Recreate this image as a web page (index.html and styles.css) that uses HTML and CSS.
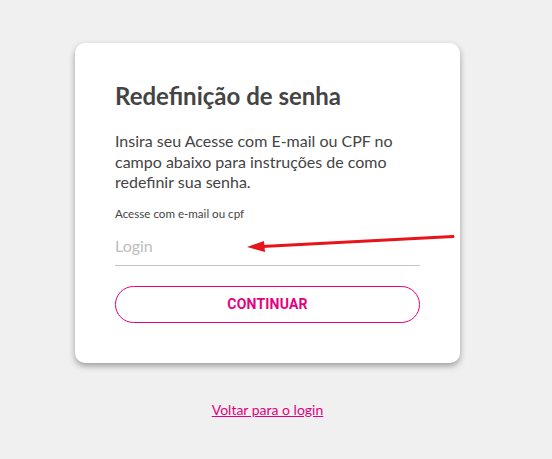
FILE: index.html
```html
<!DOCTYPE html>
<html lang="pt-BR">
<head>
  <meta charset="UTF-8" />
  <title>Redefinição de senha</title>
  <link rel="stylesheet" href="styles.css">
</head>
<body>
  <div class="page">
    <div class="card">
      <h1>Redefinição de senha</h1>
      <p class="intro">Insira seu Acesse com E-mail ou CPF no campo abaixo para instruções de como redefinir sua senha.</p>

      <label class="label" for="login">Acesse com e-mail ou cpf</label>
      <input class="field" id="login" type="text" placeholder="Login">

      <button class="btn">CONTINUAR</button>
    </div>

    <a class="back" href="#">Voltar para o login</a>
  </div>

  <!-- annotation arrow -->
  <svg class="arrow" width="552" height="459" viewBox="0 0 552 459">
    <line x1="453" y1="236.5" x2="262" y2="246.5" stroke="#e8141b" stroke-width="3" stroke-linecap="round"/>
    <polygon points="247,247 264,241 265,252" fill="#e8141b"/>
  </svg>
</body>
</html>
```

FILE: styles.css
```css
body {
  margin: 0;
  background: #f0f0f0;
  font-family: "Lato", sans-serif;
  color: #444;
}

.page {
  width: 535px;
  padding-top: 43px;
  display: flex;
  flex-direction: column;
  align-items: center;
}

.card {
  width: 385px;
  box-sizing: border-box;
  background: #fff;
  border-radius: 10px;
  padding: 38px 40px 40px;
  box-shadow: 0 3px 6px rgba(0, 0, 0, 0.35);
  display: flex;
  flex-direction: column;
}

h1 {
  margin: 0;
  font-size: 24px;
  font-weight: 700;
  line-height: 30px;
  color: #444;
}

.intro {
  margin: 20px 0 0;
  font-size: 16px;
  line-height: 20.5px;
  color: #444;
}

.label {
  margin-top: 14px;
  font-size: 11.6px;
  color: #444;
}

.field {
  margin-top: 10px;
  border: none;
  border-bottom: 1px solid #c4c4c4;
  padding: 6px 0 10px;
  font-family: "Lato", sans-serif;
  font-size: 16px;
  outline: none;
  background: transparent;
}

.field::placeholder {
  color: #bdbdbd;
}

.btn {
  margin-top: 20px;
  height: 37px;
  border: 1px solid #e6007e;
  border-radius: 19px;
  background: #fff;
  color: #e6007e;
  font-family: "Roboto", sans-serif;
  font-weight: 700;
  font-size: 14px;
  letter-spacing: 0.2px;
  cursor: pointer;
}

.back {
  margin-top: 38px;
  font-size: 14px;
  color: #e6007e;
}

.arrow {
  position: absolute;
  top: 0;
  left: 0;
  pointer-events: none;
}
```
